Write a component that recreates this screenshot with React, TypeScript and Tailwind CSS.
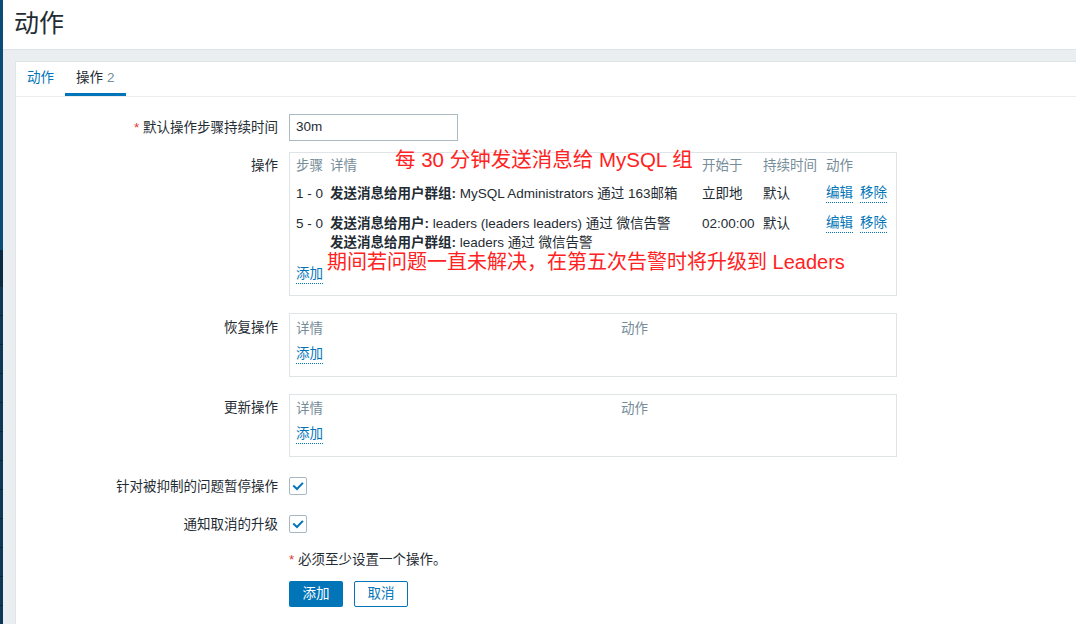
import React from "react";

const FONT = '"Liberation Sans", "Noto Sans CJK SC", sans-serif';

function Sidebar() {
  const items = Array.from({ length: 12 });
  return (
    <div className="flex w-[3px] shrink-0 flex-col bg-[#0d3554]">
      <div className="h-[250px] shrink-0 bg-[#0a4b77]" />
      <div className="h-[37px] shrink-0 bg-[#082a42]" />
      {items.map((_, i) => (
        <div key={i} className="h-[29px] shrink-0 border-b border-[#082538] bg-[#0e3858]" />
      ))}
    </div>
  );
}

function Link({ children }: { children: React.ReactNode }) {
  return (
    <span className="inline-block border-b border-dotted border-[#0275b8] leading-[18px] text-[#0275b8]">
      {children}
    </span>
  );
}

function Check() {
  return (
    <div className="flex h-[18px] w-[18px] items-center justify-center rounded-[2px] border border-[#a9b8c0] bg-white">
      <svg width="12" height="12" viewBox="0 0 12 12">
        <path d="M2 6.2 L5 9 L10.2 3.6" fill="none" stroke="#0275b8" strokeWidth="2" strokeLinecap="square" />
      </svg>
    </div>
  );
}

function Label({ children, pt = "" }: { children: React.ReactNode; pt?: string }) {
  return (
    <div className={`w-[273px] shrink-0 pr-[11px] text-right leading-[19px] ${pt}`}>{children}</div>
  );
}

export default function App() {
  return (
    <div
      className="flex h-[624px] w-[1076px] overflow-hidden bg-[#ebeef0] text-[13.5px] text-[#1f2c33]"
      style={{ fontFamily: FONT }}
    >
      <Sidebar />
      <div className="flex min-w-0 flex-1 flex-col">
        {/* header */}
        <div className="flex h-[50px] shrink-0 items-center border-b border-[#dfe4e7] bg-white pb-[3px] pl-[11px]">
          <h1 className="text-[25px] font-normal leading-none text-[#1f2c33]">动作</h1>
        </div>
        <div className="h-[11px] shrink-0" />
        {/* card */}
        <div className="ml-[12px] mr-[-20px] flex-1 border-l border-t border-[#dfe4e7] bg-white">
          {/* tabs */}
          <div className="flex h-[35px] border-b border-[#ebeef0]">
            <div className="flex items-center px-[11px] pb-[2px] text-[#0275b8]">动作</div>
            <div className="flex items-center border-b-[3px] border-[#0275b8] px-[11px] pt-[1px]">
              操作<span className="ml-[4px] text-[#768d99]">2</span>
            </div>
          </div>

          {/* form */}
          <div className="pt-[17px]">
            <div className="flex">
              <div className="w-[273px] shrink-0 pr-[11px] text-right leading-[27px]">
                <span className="text-[#e33734]">*</span> 默认操作步骤持续时间
              </div>
              <div className="flex h-[27px] w-[169px] items-center border border-[#acbbc2] bg-white pl-[6px]">
                30m
              </div>
            </div>

            {/* operations */}
            <div className="mt-[11px] flex">
              <Label pt="pt-[4px]">操作</Label>
              <div className="relative w-[608px] border border-[#dfe4e7] pl-[6px] pt-[3px] pb-[11px] leading-[19px]">
                <div className="flex text-[#768d99]">
                  <div className="w-[34px]">步骤</div>
                  <div className="w-[372px]">详情</div>
                  <div className="w-[61px]">开始于</div>
                  <div className="w-[63px]">持续时间</div>
                  <div>动作</div>
                </div>
                <div className="mt-[9px] flex">
                  <div className="w-[34px]">1 - 0</div>
                  <div className="w-[372px]">
                    <span className="font-bold">发送消息给用户群组:</span> MySQL Administrators 通过 163邮箱
                  </div>
                  <div className="w-[61px]">立即地</div>
                  <div className="w-[63px]">默认</div>
                  <div className="flex gap-[7px]">
                    <Link>编辑</Link>
                    <Link>移除</Link>
                  </div>
                </div>
                <div className="mt-[11px] flex">
                  <div className="w-[34px]">5 - 0</div>
                  <div className="w-[372px]">
                    <div>
                      <span className="font-bold">发送消息给用户:</span> leaders (leaders leaders) 通过 微信告警
                    </div>
                    <div>
                      <span className="font-bold">发送消息给用户群组:</span> leaders 通过 微信告警
                    </div>
                  </div>
                  <div className="w-[61px]">02:00:00</div>
                  <div className="w-[63px]">默认</div>
                  <div className="flex gap-[7px] self-start">
                    <Link>编辑</Link>
                    <Link>移除</Link>
                  </div>
                </div>
                <div className="mt-[12px]">
                  <Link>添加</Link>
                </div>

                <div className="absolute left-[105px] top-[-6px] whitespace-nowrap text-[20.5px] leading-[26px] text-[#ff2222]">
                  每 30 分钟发送消息给 MySQL 组
                </div>
                <div className="absolute left-[37px] top-[96px] whitespace-nowrap text-[20px] leading-[26px] text-[#ff2222]">
                  期间若问题一直未解决，在第五次告警时将升级到 Leaders
                </div>
              </div>
            </div>

            {/* recovery */}
            <div className="mt-[17px] flex">
              <Label pt="pt-[5px]">恢复操作</Label>
              <div className="w-[608px] border border-[#dfe4e7] pl-[6px] pt-[5px] pb-[12px] leading-[19px]">
                <div className="flex text-[#768d99]">
                  <div className="w-[325px]">详情</div>
                  <div>动作</div>
                </div>
                <div className="mt-[6px]">
                  <Link>添加</Link>
                </div>
              </div>
            </div>

            {/* update */}
            <div className="mt-[17px] flex">
              <Label pt="pt-[4px]">更新操作</Label>
              <div className="w-[608px] border border-[#dfe4e7] pl-[6px] pt-[4px] pb-[12px] leading-[19px]">
                <div className="flex text-[#768d99]">
                  <div className="w-[325px]">详情</div>
                  <div>动作</div>
                </div>
                <div className="mt-[6px]">
                  <Link>添加</Link>
                </div>
              </div>
            </div>

            {/* checkboxes */}
            <div className="mt-[20px] flex h-[18px] items-center">
              <Label pt="pt-[1px]">针对被抑制的问题暂停操作</Label>
              <Check />
            </div>
            <div className="mt-[20px] flex h-[18px] items-center">
              <Label pt="pt-[1px]">通知取消的升级</Label>
              <Check />
            </div>

            <div className="mt-[17px] flex leading-[19px]">
              <div className="w-[273px] shrink-0" />
              <div>
                <span className="text-[#e33734]">*</span> 必须至少设置一个操作。
              </div>
            </div>

            <div className="mt-[12px] flex">
              <div className="w-[273px] shrink-0" />
              <div className="flex gap-[11px]">
                <button className="flex h-[26px] w-[54px] items-center justify-center rounded-[2px] bg-[#0275b8] text-white">
                  添加
                </button>
                <button className="flex h-[26px] w-[54px] items-center justify-center rounded-[2px] border border-[#0275b8] bg-white text-[#0275b8]">
                  取消
                </button>
              </div>
            </div>
          </div>
        </div>
      </div>
    </div>
  );
}
